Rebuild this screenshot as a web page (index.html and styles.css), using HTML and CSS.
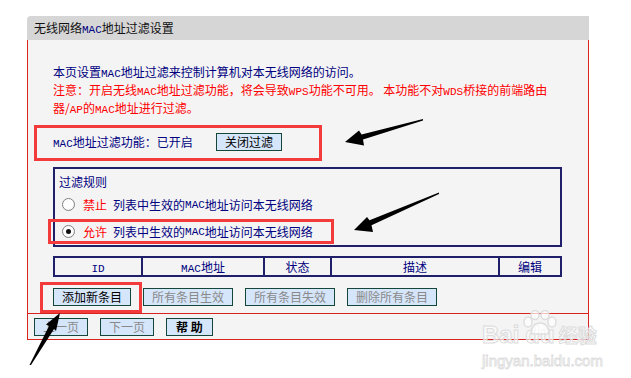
FILE: index.html
```html
<!DOCTYPE html>
<html lang="zh-CN">
<head>
  <meta charset="UTF-8" />
  <meta name="viewport" content="width=device-width, initial-scale=1.0"/>
  <title>无线网络MAC地址过滤设置</title>
  <link rel="stylesheet" href="styles.css">
</head>
<body>
  <div class="panel">
    <div class="panel-title">无线网络<span class="en">MAC</span>地址过滤设置</div>

    <div class="panel-body">
      <p class="intro">
        本页设置<span class="en">MAC</span>地址过滤来控制计算机对本无线网络的访问。<br>
        <span class="red">注意：开启无线<span class="en">MAC</span>地址过滤功能，将会导致<span class="en">WPS</span>功能不可用。 本功能不对<span class="en">WDS</span>桥接的前端路由<br>器/<span class="en">AP</span>的<span class="en">MAC</span>地址进行过滤。</span>
      </p>

      <div class="status-row">
        <span class="status-label"><span class="en">MAC</span>地址过滤功能：已开启</span>
        <button class="btn">关闭过滤</button>
      </div>

      <div class="rules">
        <div class="rules-title">过滤规则</div>
        <div class="rule"><span class="radio"></span><span class="red">禁止</span>列表中生效的<span class="en">MAC</span>地址访问本无线网络</div>
        <div class="rule"><span class="radio checked"></span><span class="red">允许</span>列表中生效的<span class="en">MAC</span>地址访问本无线网络</div>
      </div>

      <table class="list">
        <colgroup>
          <col style="width:90px"><col style="width:122px"><col style="width:67px"><col style="width:168px"><col style="width:62px">
        </colgroup>
        <thead>
          <tr><th><span class="en">ID</span></th><th><span class="en">MAC</span>地址</th><th>状态</th><th>描述</th><th>编辑</th></tr>
        </thead>
      </table>

      <div class="actions">
        <button class="btn">添加新条目</button>
        <button class="btn off">所有条目生效</button>
        <button class="btn off">所有条目失效</button>
        <button class="btn off">删除所有条目</button>
      </div>
    </div>

    <div class="panel-foot">
      <button class="btn off">上一页</button>
      <button class="btn off">下一页</button>
      <button class="btn bold">帮 助</button>
    </div>
  </div>

  <!-- annotations drawn on top of the screenshot -->
  <svg class="marks" width="631" height="378" viewBox="0 0 631 378">
    <g fill="none" stroke="#f43b3b" stroke-width="3">
      <rect x="35.5" y="126.5" width="285" height="33" />
      <rect x="49.5" y="220.5" width="283" height="22" />
      <rect x="41.5" y="283.5" width="99" height="28" />
    </g>
    <g fill="#000">
      <polygon points="423,119 361.6,134.5 359,130.5 345,142 364,145.5 363,139.5 423,120.5" />
      <polygon points="439,192.5 369.5,220.3 367,217 354,230 373,232 371.5,225.3 439,194" />
      <polygon points="29.5,365 49,326 46,324.5 60,313 56,331 54,329 31,365" />
    </g>
  </svg>

  <div class="watermark">
    <svg class="paw" width="40" height="26" viewBox="0 0 40 26">
      <g fill="rgba(255,255,255,0.7)" stroke="#dedede" stroke-width="1.5">
        <ellipse cx="8" cy="12" rx="4" ry="5" />
        <ellipse cx="15" cy="5" rx="4" ry="4.5" />
        <ellipse cx="25" cy="5" rx="4" ry="4.5" />
        <ellipse cx="32" cy="12" rx="4" ry="5" />
        <path d="M20 13 C13 13 10 20 12 24 L28 24 C30 20 27 13 20 13 Z" />
      </g>
    </svg>
    <div class="wm-main"><span>Bai</span><span class="du">du</span><span class="jy">经验</span></div>
    <div class="wm-url">jingyan.baidu.com</div>
  </div>
</body>
</html>
```

FILE: styles.css
```css
body {
  margin: 0;
  background: #fff;
  font-family: "Noto Sans CJK SC", "Liberation Sans", sans-serif;
  font-size: 12px;
  line-height: 18px;
  color: #000080;
  position: relative;
  width: 631px;
  height: 378px;
  overflow: hidden;
}
.en {
  font-family: "Liberation Mono", monospace;
  font-size: 11px;
  line-height: 0;
}
.panel {
  margin: 16px 0 0 27px;
  width: 562px;
}
.panel-title {
  height: 24px;
  line-height: 24px;
  background: #d6d6d6;
  border-top-left-radius: 4px;
  padding-left: 7px;
  color: #111;
}
.panel-title .en {
  color: #000080;
  line-height: 0;
}
.panel-body {
  background: #f4f4f4;
  border: 1px solid #d8231f;
  border-top: none;
  padding: 23px 0 7px 25px;
}
.intro {
  margin: 0;
}
.red {
  color: #ff0000;
}
.status-row {
  display: flex;
  align-items: center;
  margin-top: 16px;
  height: 18px;
}
.status-label {
  display: inline-block;
  width: 163px;
}
.btn {
  font-family: "Noto Sans CJK SC", sans-serif;
  font-size: 12px;
  height: 18px;
  line-height: 16px;
  padding: 0 8px;
  margin: 0;
  background: #d5e5fa;
  border: 1px solid #15463a;
  color: #000;
}
.btn.off {
  color: #8a8a8a;
}
.btn.bold {
  font-weight: bold;
  padding: 0 9px;
}
.rules {
  margin-top: 16px;
  width: 509px;
  box-sizing: border-box;
  border: 2px solid #20206a;
}
.rules-title {
  padding: 4px 0 0 4px;
}
.rule {
  display: flex;
  align-items: center;
  height: 27px;
  padding-left: 7px;
  white-space: nowrap;
}
.rule .red {
  margin-right: 6px;
}
.radio {
  width: 13px;
  height: 13px;
  box-sizing: border-box;
  border: 1px solid #808080;
  border-radius: 50%;
  background: radial-gradient(circle at 40% 40%, #fff 55%, #e4e4e4);
  margin-right: 8px;
  position: relative;
}
.radio.checked::after {
  content: "";
  position: absolute;
  left: 3px;
  top: 3px;
  width: 5px;
  height: 5px;
  border-radius: 50%;
  background: #111;
}
.list {
  margin-top: 9px;
  width: 509px;
  table-layout: fixed;
  border-collapse: separate;
  border-spacing: 0;
}
.list th {
  height: 21px;
  box-sizing: border-box;
  padding: 0;
  font-weight: normal;
  text-align: center;
  line-height: 17px;
  border-top: 2px solid #20206a;
  border-bottom: 2px solid #20206a;
  border-right: 2px solid #20206a;
}
.list th:first-child {
  border-left: 2px solid #20206a;
}
.actions {
  display: flex;
  gap: 12px;
  margin-top: 11px;
}
.panel-foot {
  background: #f4f4f4;
  border: 1px solid #d8231f;
  border-top: none;
  padding: 4px 6px 3px;
  display: flex;
  gap: 12px;
}
.marks {
  position: absolute;
  left: 0;
  top: 0;
  pointer-events: none;
}
.watermark {
  position: absolute;
  left: 482px;
  top: 306px;
  width: 120px;
  pointer-events: none;
}
.paw {
  position: absolute;
  left: 38px;
  top: 4px;
}
.wm-main {
  margin-top: 18px;
  font-family: "Liberation Sans", sans-serif;
  font-weight: bold;
  font-size: 24px;
  line-height: 22px;
  color: rgba(255, 255, 255, 0.6);
  -webkit-text-stroke: 1px #dcdcdc;
  white-space: nowrap;
}
.wm-main .du {
  margin-left: 6px;
}
.wm-main .jy {
  font-family: "Noto Sans CJK SC", sans-serif;
  font-size: 19px;
  margin-left: 4px;
}
.wm-url {
  margin-top: 6px;
  font-family: "Liberation Sans", sans-serif;
  font-size: 15px;
  line-height: 18px;
  color: rgba(255, 255, 255, 0.6);
  -webkit-text-stroke: 0.8px #dcdcdc;
  white-space: nowrap;
}
```
